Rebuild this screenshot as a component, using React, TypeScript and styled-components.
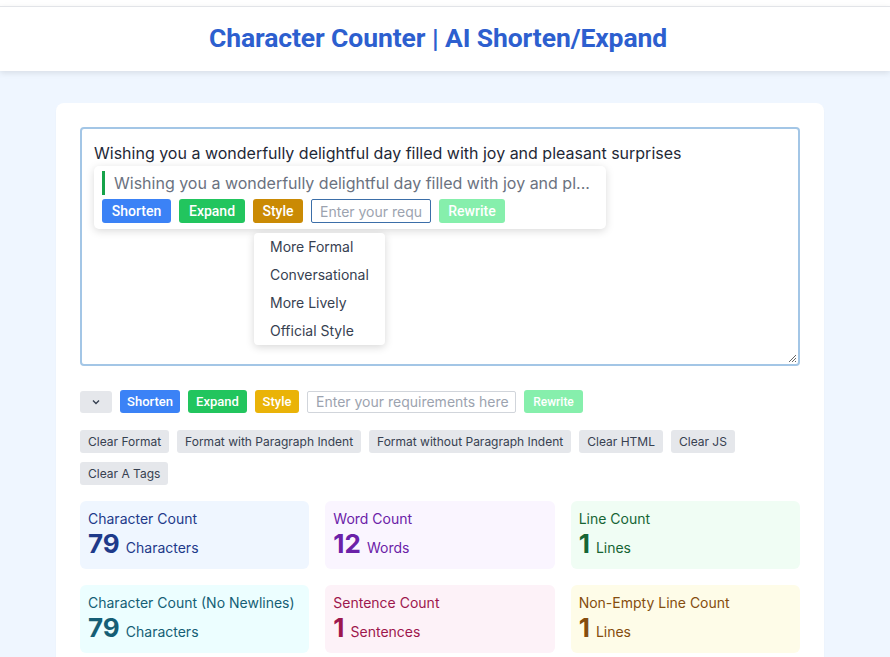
import React from "react";
import styled, { createGlobalStyle } from "styled-components";

const Global = createGlobalStyle`
  html, body { margin: 0; padding: 0; background: #eff6ff; }
  body { font-family: Inter, "Noto Sans", sans-serif; color: #1f2937; }
  * { box-sizing: border-box; }
`;

const Page = styled.div`
  min-height: 657px;
  display: flex;
  flex-direction: column;
  background: #eff6ff;
`;

const TopStrip = styled.div`
  height: 6px;
  background: #ffffff;
`;

const Header = styled.header`
  height: 65px;
  background: #ffffff;
  border-top: 1px solid #e2e4e8;
  box-shadow: 0 2px 6px rgba(0, 0, 0, 0.1);
  display: flex;
  align-items: center;
  justify-content: center;
  padding: 0 14px 3px 0;
`;

const Title = styled.h1`
  margin: 0;
  font-family: Roboto, "Liberation Sans", sans-serif;
  font-weight: 700;
  font-size: 26.5px;
  color: #2d5fcf;
  letter-spacing: -0.1px;
`;

const Main = styled.main`
  padding: 32px 66px 0 56px;
`;

const Card = styled.section`
  background: #ffffff;
  border-radius: 8px;
  padding: 24px 24px 24px 24px;
  box-shadow: 0 1px 2px rgba(0, 0, 0, 0.03);
`;

const EditorWrap = styled.div`
  position: relative;
`;

const TextArea = styled.div`
  height: 239px;
  border: 2px solid #a3c6e6;
  border-radius: 4px;
  padding: 12px 12px;
  font-size: 16px;
  line-height: 24px;
  color: #1f2937;
  position: relative;
`;

const Resize = styled.svg`
  position: absolute;
  right: 1px;
  bottom: 1px;
`;

const Popup = styled.div`
  position: absolute;
  left: 14px;
  top: 39px;
  width: 512px;
  height: 63px;
  background: #ffffff;
  border-radius: 5px;
  box-shadow: 0 2px 8px rgba(0, 0, 0, 0.15);
  padding: 5px 8px;
  display: flex;
  flex-direction: column;
  gap: 4px;
`;

const Quote = styled.div`
  display: flex;
  align-items: center;
  gap: 9px;
  height: 24px;
  font-size: 16px;
  color: #6b7280;
  white-space: nowrap;
`;

const QuoteBar = styled.span`
  width: 3px;
  height: 24px;
  background: #16a34a;
`;

const Row = styled.div<{ $gap?: number; $mt?: number }>`
  display: flex;
  align-items: center;
  gap: ${(p) => p.$gap ?? 8}px;
  margin-top: ${(p) => p.$mt ?? 0}px;
`;

const ActionBtn = styled.button<{ $bg: string; $w: number; $h: number; $fs: number }>`
  width: ${(p) => p.$w}px;
  height: ${(p) => p.$h}px;
  border: none;
  border-radius: 3px;
  background: ${(p) => p.$bg};
  color: #ffffff;
  font-family: Roboto, "Liberation Sans", sans-serif;
  font-weight: 500;
  font-size: ${(p) => p.$fs}px;
  padding: 0;
  display: flex;
  align-items: center;
  justify-content: center;
`;

const ReqInput = styled.div<{ $w: number; $h: number; $border: string }>`
  width: ${(p) => p.$w}px;
  height: ${(p) => p.$h}px;
  border: 1px solid ${(p) => p.$border};
  border-radius: 2px;
  padding: 0 8px;
  font-size: 14px;
  color: #9ca3af;
  display: flex;
  align-items: center;
  overflow: hidden;
  white-space: nowrap;
  background: #fff;
`;

const Menu = styled.ul`
  position: absolute;
  left: 174px;
  top: 106px;
  width: 131px;
  margin: 0;
  padding: 0;
  list-style: none;
  background: #ffffff;
  border-radius: 4px;
  box-shadow: 0 2px 8px rgba(0, 0, 0, 0.16);
  z-index: 2;
`;

const MenuItem = styled.li`
  height: 28px;
  line-height: 28px;
  padding: 0 16px;
  font-size: 14px;
  color: #374151;
`;

const Toolbar = styled.div`
  display: flex;
  align-items: center;
  gap: 8px;
  margin-top: 24px;
`;

const ChevronBtn = styled.button`
  width: 32px;
  height: 22px;
  border: none;
  border-radius: 3px;
  background: #e5e7eb;
  display: flex;
  align-items: center;
  justify-content: center;
  padding: 0;
`;

const ToolWrap = styled.div`
  display: flex;
  flex-wrap: wrap;
  gap: 9px 8px;
  margin-top: 17px;
  max-width: 700px;
`;

const ToolBtn = styled.button`
  height: 23px;
  border: none;
  border-radius: 3px;
  background: #e5e7eb;
  color: #374151;
  font-family: Inter, sans-serif;
  font-size: 12px;
  padding: 0 8px;
`;

const Stats = styled.div`
  display: grid;
  grid-template-columns: repeat(3, 1fr);
  gap: 16px;
  margin-top: 16px;
`;

const Stat = styled.div<{ $bg: string; $fg: string }>`
  height: 68px;
  background: ${(p) => p.$bg};
  color: ${(p) => p.$fg};
  border-radius: 6px;
  padding: 8px 8px;
`;

const StatLabel = styled.div`
  font-size: 14px;
  line-height: 20px;
`;

const StatValue = styled.div`
  display: flex;
  align-items: baseline;
  gap: 6px;
  margin-top: -1px;
`;

const Num = styled.span`
  font-size: 26px;
  font-weight: 700;
  line-height: 32px;
`;

const Unit = styled.span`
  font-size: 14px;
`;

const stats = [
  { label: "Character Count", n: 79, unit: "Characters", bg: "#eff6ff", fg: "#1e3a8a" },
  { label: "Word Count", n: 12, unit: "Words", bg: "#faf5ff", fg: "#6b21a8" },
  { label: "Line Count", n: 1, unit: "Lines", bg: "#f0fdf4", fg: "#166534" },
  { label: "Character Count (No Newlines)", n: 79, unit: "Characters", bg: "#ecfeff", fg: "#155e75" },
  { label: "Sentence Count", n: 1, unit: "Sentences", bg: "#fdf2f8", fg: "#9d174d" },
  { label: "Non-Empty Line Count", n: 1, unit: "Lines", bg: "#fefce8", fg: "#854d0e" },
];

const tools = [
  "Clear Format",
  "Format with Paragraph Indent",
  "Format without Paragraph Indent",
  "Clear HTML",
  "Clear JS",
  "Clear A Tags",
];

export default function App() {
  return (
    <Page>
      <Global />
      <TopStrip />
      <Header>
        <Title>Character Counter | AI Shorten/Expand</Title>
      </Header>
      <Main>
        <Card>
          <EditorWrap>
            <TextArea>
              Wishing you a wonderfully delightful day filled with joy and pleasant surprises
              <Resize width="10" height="10" viewBox="0 0 10 10">
                <path d="M9 2 L2 9 M9 5 L5 9 M9 8 L8 9" stroke="#666" strokeWidth="1" />
              </Resize>
            </TextArea>
            <Popup>
              <Quote>
                <QuoteBar />
                Wishing you a wonderfully delightful day filled with joy and pl...
              </Quote>
              <Row>
                <ActionBtn $bg="#3b82f6" $w={69} $h={24} $fs={14}>Shorten</ActionBtn>
                <ActionBtn $bg="#22c55e" $w={66} $h={24} $fs={14}>Expand</ActionBtn>
                <ActionBtn $bg="#ca8a04" $w={50} $h={24} $fs={14}>Style</ActionBtn>
                <ReqInput $w={120} $h={24} $border="#3b6ea8">Enter your requ</ReqInput>
                <ActionBtn $bg="#86efac" $w={66} $h={24} $fs={14}>Rewrite</ActionBtn>
              </Row>
            </Popup>
            <Menu>
              <MenuItem>More Formal</MenuItem>
              <MenuItem>Conversational</MenuItem>
              <MenuItem>More Lively</MenuItem>
              <MenuItem>Official Style</MenuItem>
            </Menu>
          </EditorWrap>
          <Toolbar>
            <ChevronBtn>
              <svg width="10" height="10" viewBox="0 0 10 10">
                <path d="M2 3.5 L5 6.5 L8 3.5" fill="none" stroke="#374151" strokeWidth="1.4" />
              </svg>
            </ChevronBtn>
            <ActionBtn $bg="#3b82f6" $w={60} $h={23} $fs={13}>Shorten</ActionBtn>
            <ActionBtn $bg="#22c55e" $w={59} $h={23} $fs={13}>Expand</ActionBtn>
            <ActionBtn $bg="#eab308" $w={44} $h={23} $fs={13}>Style</ActionBtn>
            <ReqInput $w={209} $h={22} $border="#d1d5db">Enter your requirements here</ReqInput>
            <ActionBtn $bg="#86efac" $w={59} $h={23} $fs={12}>Rewrite</ActionBtn>
          </Toolbar>
          <ToolWrap>
            {tools.map((t) => (
              <ToolBtn key={t}>{t}</ToolBtn>
            ))}
          </ToolWrap>
          <Stats>
            {stats.map((s) => (
              <Stat key={s.label} $bg={s.bg} $fg={s.fg}>
                <StatLabel>{s.label}</StatLabel>
                <StatValue>
                  <Num>{s.n}</Num>
                  <Unit>{s.unit}</Unit>
                </StatValue>
              </Stat>
            ))}
          </Stats>
        </Card>
      </Main>
    </Page>
  );
}
